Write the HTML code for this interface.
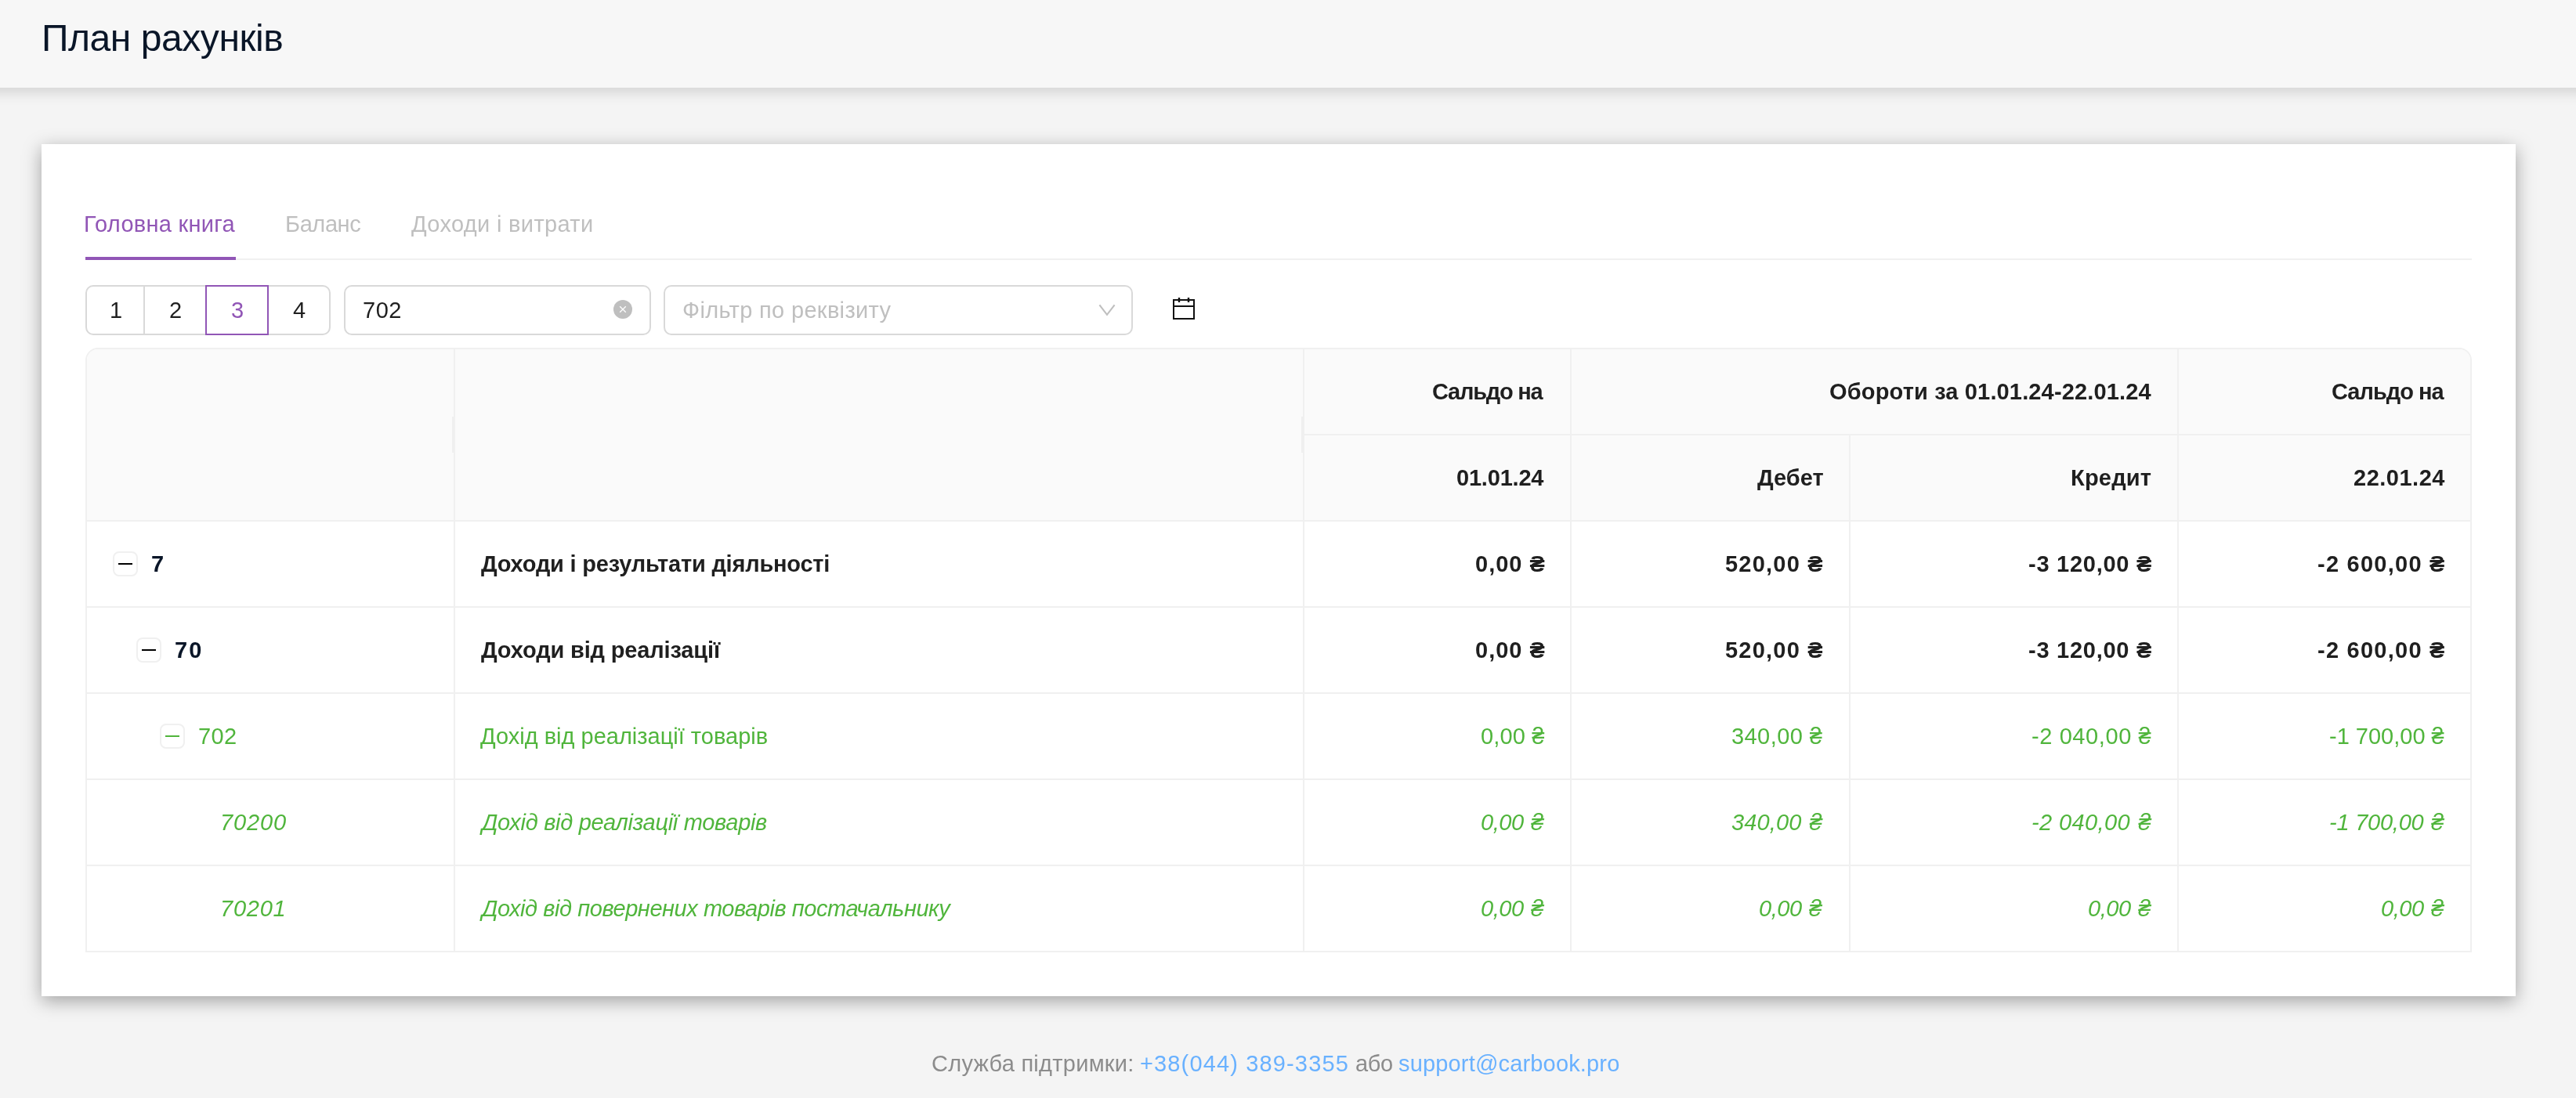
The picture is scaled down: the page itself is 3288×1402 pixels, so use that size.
<!DOCTYPE html>
<html lang="uk">
<head>
<meta charset="utf-8">
<title>План рахунків</title>
<style>
*{box-sizing:border-box;margin:0;padding:0}
html,body{width:3288px;height:1402px;overflow:hidden}
body{background:#f4f4f4;font-family:"Liberation Sans",sans-serif;position:relative;color:#1f1f1f}
.a{position:absolute;white-space:nowrap}
.t,.title{-webkit-font-smoothing:antialiased;will-change:transform}
.t{font-size:29px;line-height:32px;height:32px}
.hdr{left:-60px;top:0;width:3408px;height:112px;background:#f7f7f7;box-shadow:0 4px 18px rgba(0,0,0,0.16);z-index:2}
.title{left:113px;top:21px;font-size:48px;line-height:56px;color:#0a1628;letter-spacing:-0.45px}
.card{left:53px;top:184px;width:3158px;height:1088px;background:#fff;box-shadow:0 6px 22px rgba(0,0,0,0.34)}
.purple{color:#9156b6}
.grey{color:#bfbfbf}
.box{border:2px solid #d9d9d9;background:#fff}
.b{font-weight:bold}
.navy{color:#0a1628}
.g{color:#50b53c}
.i{font-style:italic}
.ft{color:#8c8c8c}
.lk{color:#69b1ff}
.vl{width:2px;background:#f0f0f0}
.hl{height:2px;background:#f0f0f0}
.exp{width:32px;height:32px;border:2px solid #f0f0f0;border-radius:8px;background:#fff}
.exp::after{content:"";position:absolute;left:5px;top:13px;width:18px;height:2px;background:currentColor}
</style>
</head>
<body>
<div class="a hdr"><div class="a title">План рахунків</div></div>
<div class="a card"></div>

<div class="a hl" style="left:109px;top:330px;width:3046px"></div>
<div class="a" style="left:109px;top:328px;width:192px;height:4px;background:#9156b6"></div>

<div class="a box" style="left:109px;top:364px;width:313px;height:64px;border-radius:10px"></div>
<div class="a" style="left:183px;top:366px;width:2px;height:60px;background:#d9d9d9"></div>
<div class="a" style="left:262px;top:364px;width:81px;height:64px;border:2px solid #9156b6"></div>

<div class="a box" style="left:439px;top:364px;width:392px;height:64px;border-radius:10px"></div>
<svg class="a" style="left:783px;top:383px" width="24" height="24" viewBox="0 0 24 24"><circle cx="12" cy="12" r="12" fill="#bfbfbf"/><path d="M8.2 8.2L15.8 15.8M15.8 8.2L8.2 15.8" stroke="#fff" stroke-width="1.3"/></svg>

<div class="a box" style="left:847px;top:364px;width:599px;height:64px;border-radius:10px"></div>
<svg class="a" style="left:1401px;top:386px" width="24" height="20" viewBox="0 0 24 20"><path d="M2.4 3.4L12 15.9L21.6 3.4" fill="none" stroke="#bfbfbf" stroke-width="2.1"/></svg>

<svg class="a" style="left:1497px;top:380px" width="28" height="28" viewBox="0 0 28 28"><rect x="1" y="3" width="26" height="24" fill="none" stroke="#111" stroke-width="2"/><path d="M1 11H27" stroke="#111" stroke-width="2"/><path d="M8 0V6M20 0V6" stroke="#111" stroke-width="2.4"/></svg>

<div class="a" style="left:109px;top:444px;width:3046px;height:772px;border:2px solid #f0f0f0;border-radius:16px 16px 0 0;background:#fff;overflow:hidden"><div class="a" style="left:0;top:0;width:3042px;height:218px;background:#fafafa"></div></div>
<div class="a vl" style="left:579px;top:446px;height:770px"></div>
<div class="a vl" style="left:1663px;top:446px;height:770px"></div>
<div class="a vl" style="left:2004px;top:446px;height:770px"></div>
<div class="a vl" style="left:2360px;top:556px;height:660px"></div>
<div class="a vl" style="left:2779px;top:446px;height:770px"></div>
<div class="a" style="left:577px;top:532px;width:2px;height:46px;background:#efefef"></div>
<div class="a" style="left:1661px;top:532px;width:2px;height:46px;background:#efefef"></div>
<div class="a hl" style="left:1665px;top:554px;width:1488px"></div>
<div class="a hl" style="left:111px;top:664px;width:3042px"></div>
<div class="a hl" style="left:111px;top:774px;width:3042px"></div>
<div class="a hl" style="left:111px;top:884px;width:3042px"></div>
<div class="a hl" style="left:111px;top:994px;width:3042px"></div>
<div class="a hl" style="left:111px;top:1104px;width:3042px"></div>

<div class="a exp" style="left:144px;top:704px;color:#000"></div>
<div class="a exp" style="left:174px;top:814px;color:#000"></div>
<div class="a exp" style="left:204px;top:924px;color:#50b53c"></div>
<div class="a t purple" style="left:107.00px;top:270px;letter-spacing:0.292px">Головна книга</div>
<div class="a t grey" style="left:364.00px;top:270px;letter-spacing:-0.400px">Баланс</div>
<div class="a t grey" style="left:525.00px;top:270px;letter-spacing:0.333px">Доходи і витрати</div>
<div class="a t " style="left:140.00px;top:380px">1</div>
<div class="a t " style="left:216.00px;top:380px">2</div>
<div class="a t purple" style="left:295.00px;top:380px">3</div>
<div class="a t " style="left:374.00px;top:380px">4</div>
<div class="a t " style="left:463.00px;top:380px;letter-spacing:0.500px">702</div>
<div class="a t grey" style="left:871.00px;top:380px;letter-spacing:0.333px">Фільтр по реквізиту</div>
<div class="a t b" style="right:1319.24px;top:484px;letter-spacing:-1.238px">Сальдо на</div>
<div class="a t b" style="right:541.85px;top:484px;letter-spacing:0.148px">Обороти за 01.01.24-22.01.24</div>
<div class="a t b" style="right:168.99px;top:484px;letter-spacing:-0.987px">Сальдо на</div>
<div class="a t b" style="right:1318.20px;top:594px;letter-spacing:-0.200px">01.01.24</div>
<div class="a t b" style="right:960.00px;top:594px">Дебет</div>
<div class="a t b" style="right:541.80px;top:594px;letter-spacing:0.200px">Кредит</div>
<div class="a t b" style="right:167.50px;top:594px;letter-spacing:0.500px">22.01.24</div>
<div class="a t b navy" style="left:193.00px;top:704px">7</div>
<div class="a t b" style="left:614.00px;top:704px;letter-spacing:-0.207px">Доходи і результати діяльності</div>
<div class="a t b" style="right:1314.98px;top:704px;letter-spacing:1.020px">0,00 ₴</div>
<div class="a t b" style="right:959.79px;top:704px;letter-spacing:1.214px">520,00 ₴</div>
<div class="a t b" style="right:541.26px;top:704px;letter-spacing:0.740px">-3 120,00 ₴</div>
<div class="a t b" style="right:166.75px;top:704px;letter-spacing:1.250px">-2 600,00 ₴</div>
<div class="a t b navy" style="left:223.00px;top:814px;letter-spacing:2.200px">70</div>
<div class="a t b" style="left:614.00px;top:814px;letter-spacing:-0.150px">Доходи від реалізації</div>
<div class="a t b" style="right:1314.98px;top:814px;letter-spacing:1.020px">0,00 ₴</div>
<div class="a t b" style="right:959.79px;top:814px;letter-spacing:1.214px">520,00 ₴</div>
<div class="a t b" style="right:541.26px;top:814px;letter-spacing:0.740px">-3 120,00 ₴</div>
<div class="a t b" style="right:166.75px;top:814px;letter-spacing:1.250px">-2 600,00 ₴</div>
<div class="a t g" style="left:253.00px;top:924px;letter-spacing:0.350px">702</div>
<div class="a t g" style="left:613.00px;top:924px">Дохід від реалізації товарів</div>
<div class="a t g" style="right:1316.86px;top:924px;letter-spacing:0.140px">0,00 ₴</div>
<div class="a t g" style="right:961.57px;top:924px;letter-spacing:0.429px">340,00 ₴</div>
<div class="a t g" style="right:541.40px;top:924px;letter-spacing:0.600px">-2 040,00 ₴</div>
<div class="a t g" style="right:168.00px;top:924px">-1 700,00 ₴</div>
<div class="a t g i" style="left:281.00px;top:1034px;letter-spacing:0.875px">70200</div>
<div class="a t g i" style="left:615.00px;top:1034px;letter-spacing:-0.296px">Дохід від реалізації товарів</div>
<div class="a t g i" style="right:1316.46px;top:1034px;letter-spacing:-0.460px">0,00 ₴</div>
<div class="a t g i" style="right:960.86px;top:1034px;letter-spacing:0.143px">340,00 ₴</div>
<div class="a t g i" style="right:540.61px;top:1034px;letter-spacing:0.390px">-2 040,00 ₴</div>
<div class="a t g i" style="right:167.23px;top:1034px;letter-spacing:-0.230px">-1 700,00 ₴</div>
<div class="a t g i" style="left:281.00px;top:1144px;letter-spacing:0.750px">70201</div>
<div class="a t g i" style="left:615.00px;top:1144px;letter-spacing:-0.439px">Дохід від повернених товарів постачальнику</div>
<div class="a t g i" style="right:1316.46px;top:1144px;letter-spacing:-0.460px">0,00 ₴</div>
<div class="a t g i" style="right:961.44px;top:1144px;letter-spacing:-0.440px">0,00 ₴</div>
<div class="a t g i" style="right:541.44px;top:1144px;letter-spacing:-0.440px">0,00 ₴</div>
<div class="a t g i" style="right:167.46px;top:1144px;letter-spacing:-0.460px">0,00 ₴</div>
<div class="a t ft" style="left:1189.00px;top:1342px;letter-spacing:0.262px">Служба підтримки:</div>
<div class="a t lk" style="left:1455.00px;top:1342px;letter-spacing:1.144px">+38(044) 389-3355</div>
<div class="a t ft" style="left:1730.00px;top:1342px;letter-spacing:-0.400px">або</div>
<div class="a t lk" style="left:1785.00px;top:1342px;letter-spacing:0.167px">support@carbook.pro</div>
</body>
</html>
